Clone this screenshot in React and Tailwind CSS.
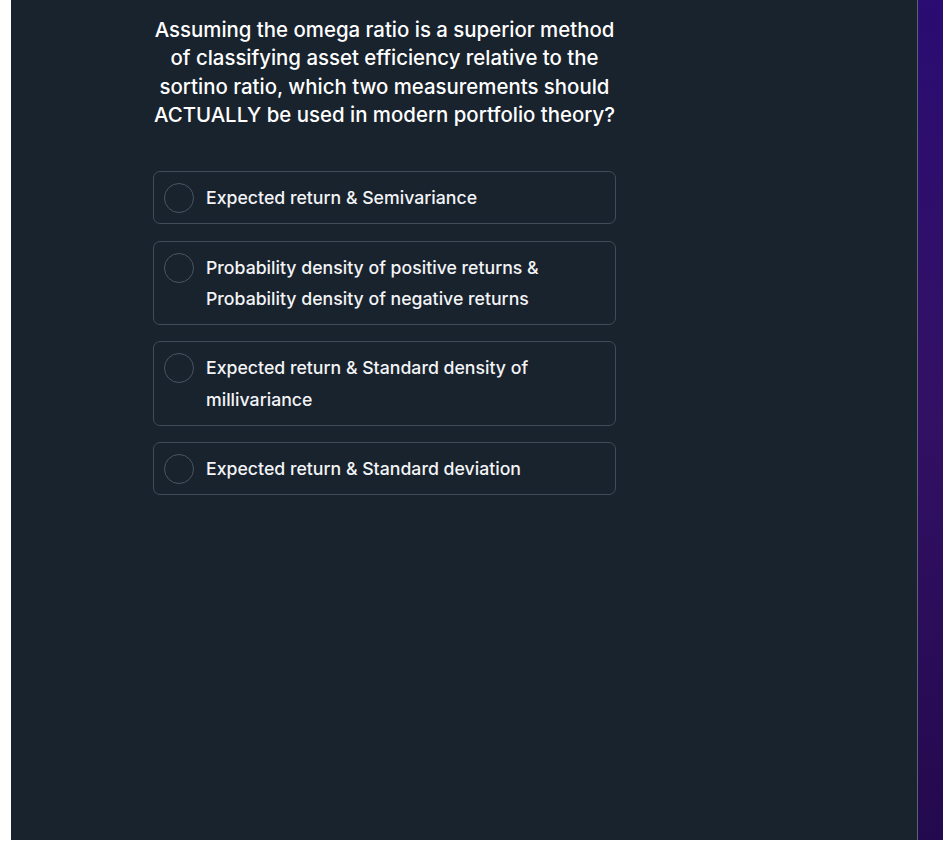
import React from 'react';

const OPTIONS = [
  'Expected return & Semivariance',
  'Probability density of positive returns & Probability density of negative returns',
  'Expected return & Standard density of millivariance',
  'Expected return & Standard deviation',
];

export default function App() {
  return (
    <div
      className="flex h-[844px] w-full bg-white"
      style={{ fontFamily: 'Inter, "Noto Sans", sans-serif' }}
    >
      <div className="w-[11px] shrink-0" />
      <div className="flex h-[840px] flex-1">
        <div className="flex-1 bg-[#19232e]">
          <div className="ml-[142px] w-[463px] pt-[16px]">
            <h1 className="text-center text-[20.4px] leading-[28.3px] font-medium text-white">
              Assuming the omega ratio is a superior method of classifying asset efficiency
              relative to the sortino ratio, which two measurements should ACTUALLY be used in
              modern portfolio theory?
            </h1>
            <div className="mt-[42px] flex flex-col gap-[16.3px]">
              {OPTIONS.map((opt, i) => (
                <button
                  key={i}
                  className="flex items-start gap-[12px] rounded-[7px] border border-[#414c59] px-[10px] py-[10px] text-left"
                >
                  <span className="mt-[1px] h-[30px] w-[30px] shrink-0 rounded-full border-[1.5px] border-[#4a5562]" />
                  <span className="text-[17.7px] leading-[31.2px] font-medium text-[#f3f4f6]">
                    {opt}
                  </span>
                </button>
              ))}
            </div>
          </div>
        </div>
        <div className="w-px bg-[#5b6470]" />
        <div className="w-[25px] bg-gradient-to-b from-[#2a0c72] via-[#321064] to-[#23094e]" />
      </div>
      <div className="w-[3px] shrink-0" />
    </div>
  );
}
